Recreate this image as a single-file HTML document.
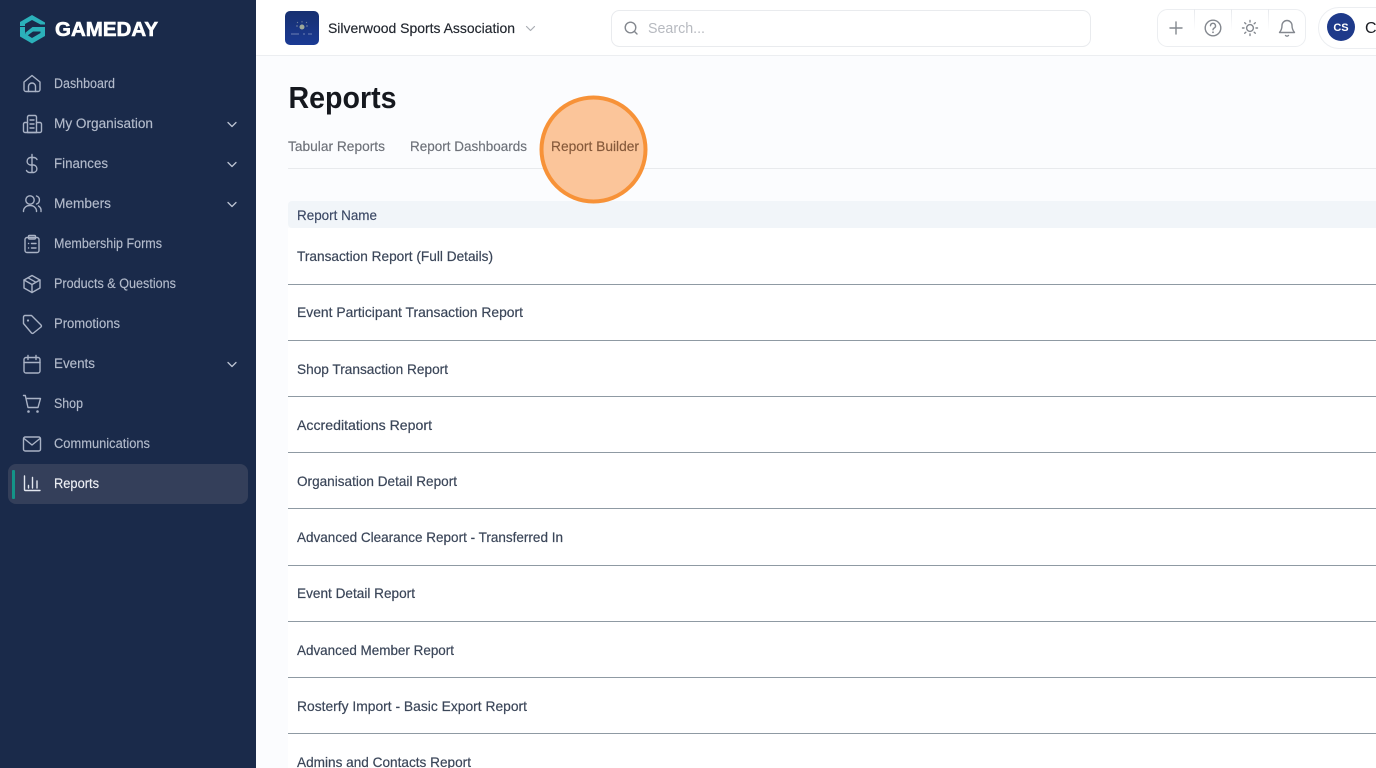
<!DOCTYPE html>
<html lang="en">
<head>
<meta charset="utf-8">
<title>Reports</title>
<style>
html,body{margin:0;padding:0;width:1376px;height:768px;overflow:hidden;background:#fff}
svg{position:absolute;left:0;top:0;display:block}
text{font-family:"Liberation Sans",sans-serif}
.nav{font-size:13.5px;fill:#b3bbcb;stroke:#b3bbcb;stroke-width:.15}
.ic{fill:none;stroke:#a9b2c5;stroke-width:1.4;stroke-linecap:round;stroke-linejoin:round}
.ch{fill:none;stroke:#bcc3d1;stroke-width:1.3;stroke-linecap:round;stroke-linejoin:round}
.row{font-size:14px;fill:#3b4659;stroke:#3b4659;stroke-width:.2}
.line{stroke:#8f9aa3;stroke-width:1}
.tab{font-size:14px;fill:#6d7179;stroke:#6d7179;stroke-width:.15}
.act{fill:none;stroke:#84888f;stroke-width:1.4;stroke-linecap:round;stroke-linejoin:round}
</style>
</head>
<body>
<svg width="1376" height="768" viewBox="0 0 1376 768" xmlns="http://www.w3.org/2000/svg">
<defs>
<linearGradient id="org" x1="0" y1="0" x2="0" y2="1"><stop offset="0" stop-color="#173070"/><stop offset="1" stop-color="#1b3a94"/></linearGradient>
<linearGradient id="dv" x1="0" y1="0" x2="0" y2="1"><stop offset="0" stop-color="#e6e8ec"/><stop offset="1" stop-color="#ffffff"/></linearGradient>
</defs>

<!-- main -->
<rect x="256" y="0" width="1120" height="768" fill="#fbfcfe"/>
<rect x="288" y="228" width="1088" height="540" fill="#ffffff"/>

<!-- top bar -->
<rect x="256" y="0" width="1120" height="55" fill="#ffffff"/>
<rect x="256" y="55" width="1120" height="1" fill="#eceef1"/>
<rect x="285" y="11" width="34" height="34" rx="5" fill="url(#org)"/>
<circle cx="302" cy="27" r="2.500" fill="#c9cfa0" opacity=".75"/>
<path d="M297 22l1 1M302 21v1.500M307 22l-1 1M296 26h2M306 26h2" stroke="#d8dcc4" stroke-width=".7" opacity=".6"/>
<path d="M291 34h8M303 34h2M308 34h4" stroke="#b9c2dc" stroke-width=".8" opacity=".7"/>
<text x="328" y="33" font-size="14" fill="#21262e" stroke="#21262e" stroke-width=".15" textLength="187" lengthAdjust="spacingAndGlyphs">Silverwood Sports Association</text>
<path d="M526.500 26.500l4 4 4-4" fill="none" stroke="#a9adb4" stroke-width="1.200" stroke-linecap="round" stroke-linejoin="round"/>

<rect x="611.500" y="10.500" width="479" height="36" rx="8" fill="#fff" stroke="#e9ebee"/>
<circle cx="630.500" cy="27.500" r="5.300" fill="none" stroke="#84888f" stroke-width="1.400"/>
<path d="M634.500 31.500l2.500 2.500" stroke="#84888f" stroke-width="1.400" stroke-linecap="round"/>
<text x="648" y="33" font-size="14.500" fill="#b7bac0" textLength="57" lengthAdjust="spacingAndGlyphs">Search...</text>

<rect x="1157.500" y="9.500" width="148" height="37" rx="10" fill="#fff" stroke="#eceef1"/>
<rect x="1194" y="9" width="1" height="22" fill="url(#dv)"/>
<rect x="1231" y="9" width="1" height="22" fill="url(#dv)"/>
<rect x="1268" y="9" width="1" height="22" fill="url(#dv)"/>
<path class="act" d="M1176 22v12M1170 28h12"/>
<circle class="act" cx="1213" cy="28" r="7.800"/>
<path class="act" d="M1210.500 25.800a2.500 2.500 0 1 1 3.700 2.200c-.8.500-1.200 1-1.200 1.800"/>
<circle cx="1213" cy="32.300" r=".9" fill="#84888f"/>
<circle class="act" cx="1250" cy="28" r="3.400"/>
<path class="act" d="M1250 20.500v1.500M1250 34v1.500M1242.500 28h1.500M1256 28h1.500M1244.700 22.700l1.100 1.100M1254.200 32.200l1.100 1.100M1244.700 33.300l1.100-1.100M1254.200 23.800l1.100-1.100"/>
<path class="act" d="M1287 20.500a5 5 0 0 0-5 5c0 4-1.300 5.500-2.500 7h15c-1.200-1.500-2.500-3-2.500-7a5 5 0 0 0-5-5z"/>
<path class="act" d="M1285.500 35.500q1.500 1.300 3 0"/>

<rect x="1318.500" y="7.500" width="80" height="41" rx="20.500" fill="#fff" stroke="#eceef1"/>
<circle cx="1341" cy="27" r="14" fill="#1e3a8a"/>
<text x="1341" y="31" font-size="11" font-weight="700" fill="#fff" text-anchor="middle">CS</text>
<text x="1365" y="33" font-size="16" fill="#1a1d23">C</text>

<!-- page title + tabs -->
<text x="288.500" y="108" font-size="31" font-weight="700" fill="#15181e" textLength="108" lengthAdjust="spacingAndGlyphs">Reports</text>
<text class="tab" x="288" y="151" textLength="97" lengthAdjust="spacingAndGlyphs">Tabular Reports</text>
<text class="tab" x="410" y="151" textLength="117" lengthAdjust="spacingAndGlyphs">Report Dashboards</text>
<rect x="288" y="168" width="1088" height="1" fill="#e8eaed"/>

<!-- table -->
<path d="M1376 201H292a4 4 0 0 0-4 4v19a4 4 0 0 0 4 4h1084z" fill="#f1f5f9"/>
<text x="297" y="220" font-size="14" fill="#3a4764" stroke="#3a4764" stroke-width=".15" textLength="80" lengthAdjust="spacingAndGlyphs">Report Name</text>

<text class="row" x="297" y="261" textLength="196" lengthAdjust="spacingAndGlyphs">Transaction Report (Full Details)</text>
<line class="line" x1="288" y1="284.500" x2="1376" y2="284.500"/>
<text class="row" x="297" y="317" textLength="226" lengthAdjust="spacingAndGlyphs">Event Participant Transaction Report</text>
<line class="line" x1="288" y1="340.500" x2="1376" y2="340.500"/>
<text class="row" x="297" y="374" textLength="151" lengthAdjust="spacingAndGlyphs">Shop Transaction Report</text>
<line class="line" x1="288" y1="396.500" x2="1376" y2="396.500"/>
<text class="row" x="297" y="430" textLength="135" lengthAdjust="spacingAndGlyphs">Accreditations Report</text>
<line class="line" x1="288" y1="452.500" x2="1376" y2="452.500"/>
<text class="row" x="297" y="486" textLength="160" lengthAdjust="spacingAndGlyphs">Organisation Detail Report</text>
<line class="line" x1="288" y1="508.500" x2="1376" y2="508.500"/>
<text class="row" x="297" y="542" textLength="266" lengthAdjust="spacingAndGlyphs">Advanced Clearance Report - Transferred In</text>
<line class="line" x1="288" y1="565.500" x2="1376" y2="565.500"/>
<text class="row" x="297" y="598" textLength="118" lengthAdjust="spacingAndGlyphs">Event Detail Report</text>
<line class="line" x1="288" y1="621.500" x2="1376" y2="621.500"/>
<text class="row" x="297" y="655" textLength="157" lengthAdjust="spacingAndGlyphs">Advanced Member Report</text>
<line class="line" x1="288" y1="677.500" x2="1376" y2="677.500"/>
<text class="row" x="297" y="711" textLength="230" lengthAdjust="spacingAndGlyphs">Rosterfy Import - Basic Export Report</text>
<line class="line" x1="288" y1="733.500" x2="1376" y2="733.500"/>
<text class="row" x="297" y="767" textLength="174" lengthAdjust="spacingAndGlyphs">Admins and Contacts Report</text>

<!-- highlight -->
<circle cx="593.500" cy="149.500" r="52" fill="#fbc59a" stroke="#f79238" stroke-width="4"/>
<text x="551" y="151" font-size="14" fill="#85593a" stroke="#85593a" stroke-width=".15" textLength="88" lengthAdjust="spacingAndGlyphs">Report Builder</text>

<!-- sidebar -->
<rect x="0" y="0" width="256" height="768" fill="#1a2a4a"/>

<!-- logo -->
<path d="M20 22L32 15L45 22.500L45 24.500L40.500 24.500L32 20L25 24V26H20z" fill="#2bb1ba"/>
<path d="M20 27H25V33.500L32 38L40.500 33V31.500H33L27.500 35.500L25 33L32.500 27H45V36L32 43.500L20 36.500z" fill="#2bb1ba"/>
<text x="55" y="36" font-size="20" font-weight="700" fill="#ffffff" stroke="#ffffff" stroke-width=".6" textLength="103" lengthAdjust="spacingAndGlyphs">GAMEDAY</text>

<rect x="8" y="464" width="240" height="40" rx="8" fill="#343f5a"/>
<rect x="12" y="470" width="3" height="29" rx="1" fill="#149488"/>

<!-- Dashboard -->
<path class="ic" d="M24 82L32 75.500L40 82V89.500a2 2 0 0 1-2 2H26a2 2 0 0 1-2-2z"/>
<path class="ic" d="M28.500 91.500V86.500a3.500 3.500 0 0 1 7 0V91.500"/>
<text class="nav" x="54" y="88" textLength="61" lengthAdjust="spacingAndGlyphs">Dashboard</text>
<!-- My Organisation -->
<path class="ic" d="M27.500 132.500V117a1.500 1.500 0 0 1 1.500-1.500h6a1.500 1.500 0 0 1 1.500 1.500v15.500z"/>
<path class="ic" d="M27.500 122.500H25a1.500 1.500 0 0 0-1.500 1.500v7a1.500 1.500 0 0 0 1.500 1.500h15a1.500 1.500 0 0 0 1.500-1.500v-7a1.500 1.500 0 0 0-1.500-1.500h-3.500"/>
<path class="ic" d="M30 120h4M30 124h4M30 128h4"/>
<text class="nav" x="54" y="128" textLength="99" lengthAdjust="spacingAndGlyphs">My Organisation</text>
<path class="ch" d="M228 122.500l4 4 4-4"/>
<!-- Finances -->
<path class="ic" d="M37 159.500a4 4 0 0 0-3.500-2h-3.200a3.800 3.800 0 0 0 0 7.500h3.400a3.800 3.800 0 0 1 0 7.500h-3.400a4 4 0 0 1-3.800-2M32 154.500v18"/>
<text class="nav" x="54" y="168" textLength="54" lengthAdjust="spacingAndGlyphs">Finances</text>
<path class="ch" d="M228 162.500l4 4 4-4"/>
<!-- Members -->
<circle class="ic" cx="30" cy="200" r="4.200"/>
<path class="ic" d="M23.500 211.500v-1a6 6 0 0 1 6-5h1a6 6 0 0 1 6 5v1"/>
<path class="ic" d="M36.500 196a4.200 4.200 0 0 1 0 8M38.500 206a5.500 5.500 0 0 1 2.500 5.500"/>
<text class="nav" x="54" y="208" textLength="57" lengthAdjust="spacingAndGlyphs">Members</text>
<path class="ch" d="M228 202.500l4 4 4-4"/>
<!-- Membership Forms -->
<rect class="ic" x="25" y="237.500" width="14" height="15" rx="2"/>
<rect class="ic" x="28.500" y="235.500" width="7" height="3.500" rx="1"/>
<path class="ic" d="M28.500 243.500h.1M28.500 248h.1M31.500 243.500h4.500M31.500 248h4.500"/>
<text class="nav" x="54" y="248" textLength="108" lengthAdjust="spacingAndGlyphs">Membership Forms</text>
<!-- Products -->
<path class="ic" d="M32 275.500L40 280V288L32 292.500L24 288V280z"/>
<path class="ic" d="M24 280L32 284.500L40 280M32 284.500V292.500M28 277.800L36 282.300"/>
<text class="nav" x="54" y="288" textLength="122" lengthAdjust="spacingAndGlyphs">Products &amp; Questions</text>
<!-- Promotions -->
<path class="ic" d="M23.500 317a1.500 1.500 0 0 1 1.500-1.500h6.500L41 325a1.500 1.500 0 0 1 0 2L33.500 333a1.500 1.500 0 0 1-2 0L23.500 323.500z"/>
<circle cx="28" cy="320.500" r="1.100" fill="#a9b2c5"/>
<text class="nav" x="54" y="328" textLength="66" lengthAdjust="spacingAndGlyphs">Promotions</text>
<!-- Events -->
<rect class="ic" x="24" y="357.500" width="16" height="15.500" rx="2"/>
<path class="ic" d="M24 362.500H40M28 355.500v4M36 355.500v4"/>
<text class="nav" x="54" y="368" textLength="41" lengthAdjust="spacingAndGlyphs">Events</text>
<path class="ch" d="M228 362.500l4 4 4-4"/>
<!-- Shop -->
<path class="ic" d="M23.500 395.500h1.800l2.700 12h10l2.500-9H26"/>
<circle cx="28.500" cy="411.500" r="1.300" fill="#a9b2c5"/>
<circle cx="37.500" cy="411.500" r="1.300" fill="#a9b2c5"/>
<text class="nav" x="54" y="408" textLength="29" lengthAdjust="spacingAndGlyphs">Shop</text>
<!-- Communications -->
<rect class="ic" x="23.500" y="437" width="17" height="14" rx="1.800"/>
<path class="ic" d="M24 438.500L32 445L40 438.500"/>
<text class="nav" x="54" y="448" textLength="96" lengthAdjust="spacingAndGlyphs">Communications</text>
<!-- Reports -->
<path d="M24.500 476v13.500a1 1 0 0 0 1 1H40" fill="none" stroke="#e2e6ee" stroke-width="1.400" stroke-linecap="round" stroke-linejoin="round"/>
<path d="M28.500 485.500v2.500M32.500 477.500v10.500M37 481v7" fill="none" stroke="#e2e6ee" stroke-width="1.400" stroke-linecap="round"/>
<text x="54" y="488" font-size="13.500" fill="#eef0f5" stroke="#eef0f5" stroke-width=".15" textLength="45" lengthAdjust="spacingAndGlyphs">Reports</text>
</svg>
</body>
</html>
